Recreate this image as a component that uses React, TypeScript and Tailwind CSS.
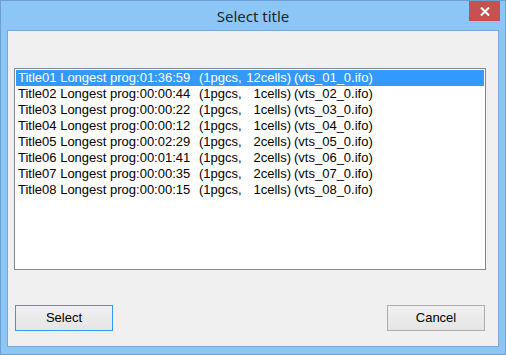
import React from "react";

const rows: [string, string, string, string][] = [
  ["Title01 Longest prog:01:36:59", "(1pgcs,", "12cells)", "(vts_01_0.ifo)"],
  ["Title02 Longest prog:00:00:44", "(1pgcs,", "1cells)", "(vts_02_0.ifo)"],
  ["Title03 Longest prog:00:00:22", "(1pgcs,", "1cells)", "(vts_03_0.ifo)"],
  ["Title04 Longest prog:00:00:12", "(1pgcs,", "1cells)", "(vts_04_0.ifo)"],
  ["Title05 Longest prog:00:02:29", "(1pgcs,", "2cells)", "(vts_05_0.ifo)"],
  ["Title06 Longest prog:00:01:41", "(1pgcs,", "2cells)", "(vts_06_0.ifo)"],
  ["Title07 Longest prog:00:00:35", "(1pgcs,", "2cells)", "(vts_07_0.ifo)"],
  ["Title08 Longest prog:00:00:15", "(1pgcs,", "1cells)", "(vts_08_0.ifo)"],
];

export default function App() {
  return (
    <div className="w-[506px] h-[355px] bg-[#8bc6f7] border border-[#6f9fcf] flex flex-col overflow-hidden">
      <div className="relative h-[29px] flex items-center justify-center shrink-0">
        <span
          className="text-[15px] text-[#262626] leading-none mt-[1px]"
          style={{ fontFamily: '"Segoe UI", "Noto Sans", "Open Sans", sans-serif' }}
        >
          Select title
        </span>
        <div className="absolute right-[5px] top-0 w-[31px] h-[20px] bg-[#c75050] flex items-center justify-center">
          <svg width="10" height="9" viewBox="0 0 10 9">
            <path d="M1 0.5 L9 8.5 M9 0.5 L1 8.5" stroke="#fff" strokeWidth="2" />
          </svg>
        </div>
      </div>
      <div
        className="mx-[6px] h-[317px] bg-[#f0f0f0] border border-[#78a8d8] flex flex-col"
        style={{ fontFamily: '"Liberation Sans", Arial, sans-serif' }}
      >
        <div className="mt-[37px] ml-[6px] w-[472px] h-[202px] bg-white border border-[#828790] p-[1px]">
          {rows.map((r, i) => (
            <div
              key={i}
              className={
                "h-[16px] pl-[2px] text-[13px] leading-[16px] whitespace-nowrap flex " +
                (i === 0 ? "bg-[#3399ff] text-white" : "text-black")
              }
            >
              <span className="w-[181px] shrink-0">{r[0]}</span>
              <span className="w-[36px] shrink-0 overflow-visible">{r[1]}</span>
              <span className="w-[56px] shrink-0 text-right">{r[2]}</span>
              <span className="ml-[3px]">{r[3]}</span>
            </div>
          ))}
        </div>
        <div className="mt-[35px] ml-[7px] w-[470px] flex justify-between">
          <button className="w-[98px] h-[26px] border border-[#3399ff] bg-gradient-to-b from-[#f0f0f0] to-[#e5e5e5] text-[13px] text-black">
            Select
          </button>
          <button className="w-[98px] h-[26px] border border-[#adadad] bg-gradient-to-b from-[#f0f0f0] to-[#e5e5e5] text-[13px] text-black">
            Cancel
          </button>
        </div>
      </div>
    </div>
  );
}
